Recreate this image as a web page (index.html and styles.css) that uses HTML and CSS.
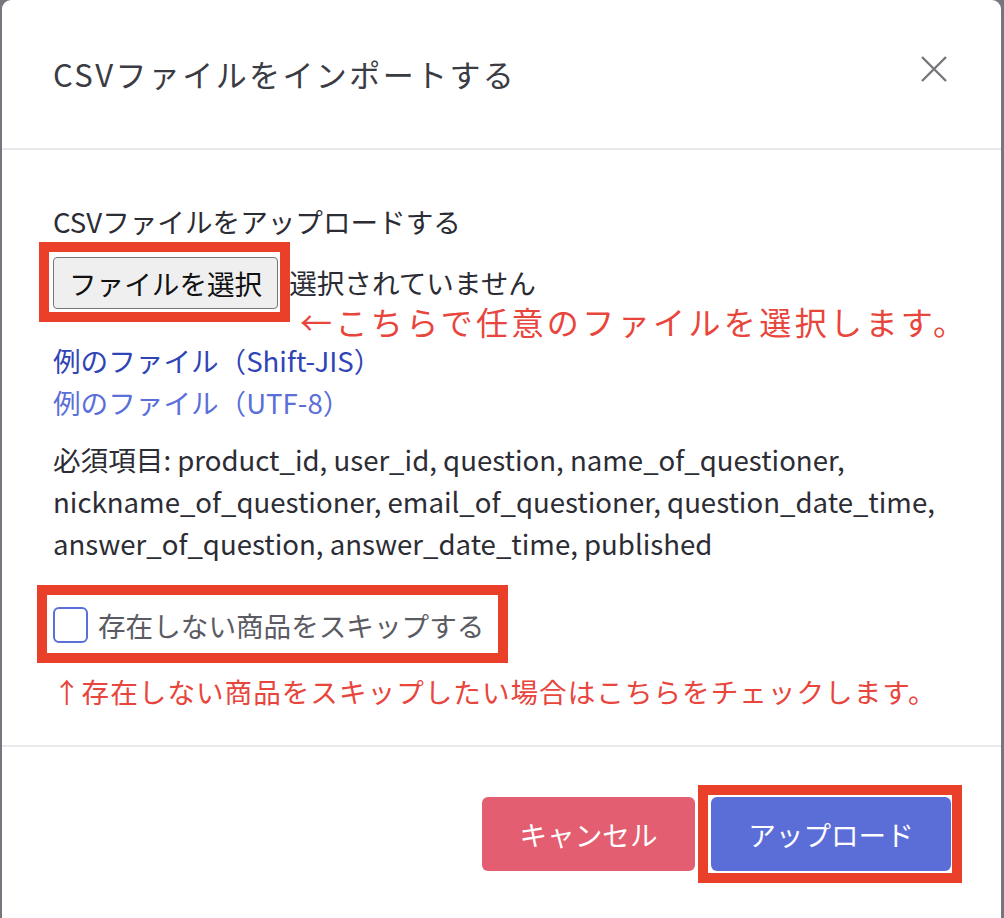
FILE: index.html
```html
<!DOCTYPE html>
<html lang="ja">
<head>
<meta charset="utf-8">
<title>CSVファイルをインポートする</title>
<link rel="stylesheet" href="styles.css">
</head>
<body>
<div class="modal">
  <header class="modal-header">
    <h1 class="modal-title">CSVファイルをインポートする</h1>
    <button class="close" type="button" aria-label="閉じる">
      <svg viewBox="0 0 26 26" width="26" height="26"><path d="M1 1L25 25M25 1L1 25" stroke="#76767c" stroke-width="2.4" fill="none"/></svg>
    </button>
  </header>
  <div class="modal-body">
    <p class="label">CSVファイルをアップロードする</p>
    <div class="file-row">
      <span class="file-btn">ファイルを選択</span>
      <span class="file-name">選択されていません</span>
      <span class="mark mark-file"></span>
      <span class="note note-file">←こちらで任意のファイルを選択します。</span>
    </div>
    <a class="link" href="#">例のファイル（Shift-JIS）</a>
    <a class="link link-visited" href="#">例のファイル（UTF-8）</a>
    <p class="required">必須項目: product_id, user_id, question, name_of_questioner, nickname_of_questioner, email_of_questioner, question_date_time, answer_of_question, answer_date_time, published</p>
    <label class="check-row">
      <span class="box"></span>
      <span class="check-text">存在しない商品をスキップする</span>
      <span class="mark mark-check"></span>
    </label>
    <p class="note note-check">↑存在しない商品をスキップしたい場合はこちらをチェックします。</p>
  </div>
  <footer class="modal-footer">
    <button class="btn btn-cancel" type="button">キャンセル</button>
    <span class="upload-wrap">
      <button class="btn btn-upload" type="button">アップロード</button>
      <span class="mark mark-upload"></span>
    </span>
  </footer>
</div>
</body>
</html>
```
FILE: styles.css
```css
* { box-sizing: border-box; }
html, body { margin: 0; height: 100%; }
body {
  background: #76767f;
  padding: 0 3px 0 2px;
  font-family: "Noto Sans CJK JP", "Noto Sans", sans-serif;
  overflow: hidden;
}
.modal {
  background: #fff;
  border-radius: 9px 9px 0 0;
  min-height: 100%;
}
.modal-header {
  height: 150px;
  border-bottom: 2px solid #e9e9ed;
  display: flex;
  justify-content: space-between;
  align-items: flex-start;
  padding: 0 54px 0 51px;
}
.modal-title {
  margin: 53px 0 0;
  font-size: 31px;
  line-height: 42px;
  font-weight: 400;
  color: #3b3b43;
  letter-spacing: 2.4px;
}
.close {
  margin-top: 56px;
  border: 0;
  padding: 0;
  background: none;
  width: 26px;
  height: 26px;
  display: block;
}
.close svg { display: block; }
.modal-body {
  padding: 50px 50px 33px 51px;
  font-size: 27.6px;
  line-height: 42px;
  color: #2c2c34;
}
.label { margin: 0; }
.file-row {
  position: relative;
  height: 80px;
  display: flex;
  align-items: center;
}
.file-btn {
  height: 52px;
  padding: 0 15px;
  background: #efefef;
  border: 1.5px solid #767676;
  border-radius: 4px;
  display: flex;
  align-items: center;
  color: #111;
  margin-top: 2px;
}
.file-name { margin-left: 11px; }
.mark {
  position: absolute;
  border: 10px solid #ea4029;
  pointer-events: none;
}
.mark-file { left: -14px; top: 0; width: 251px; height: 80px; }
.note { color: #e8453c; margin: 0; }
.note-file {
  position: absolute;
  left: 247px;
  top: 58px;
  font-size: 32px;
  line-height: 42px;
  letter-spacing: 3.4px;
  white-space: nowrap;
}
.link {
  display: block;
  color: #2f44b6;
  text-decoration: none;
}
.file-row + .link { margin-top: 17px; }
.link-visited { color: #5b6fd9; }
.required { margin: 15px 0 0; }
.check-row {
  position: relative;
  margin-top: 33px;
  height: 56px;
  display: flex;
  align-items: center;
  color: #5b5b64;
}
.box {
  width: 35px;
  height: 36px;
  border: 2px solid #5b6fd9;
  border-radius: 6px;
  margin-right: 10px;
}
.mark-check { left: -16px; top: -12px; width: 471px; height: 78px; }
.note-check { margin-top: 17px; letter-spacing: 1px; }
.modal-footer {
  border-top: 2px solid #e9e9ed;
  padding: 50px 50px 0 0;
  display: flex;
  justify-content: flex-end;
  gap: 16px;
}
.btn {
  height: 74px;
  border: 0;
  border-radius: 6px;
  color: #fff;
  font-family: inherit;
  font-size: 27.6px;
  display: block;
}
.btn-cancel { width: 213px; background: #e35e70; }
.btn-upload { width: 240px; background: #5b6ed8; }
.upload-wrap { position: relative; display: block; }
.mark-upload { left: -13px; top: -12px; width: 264px; height: 98px; }
```
